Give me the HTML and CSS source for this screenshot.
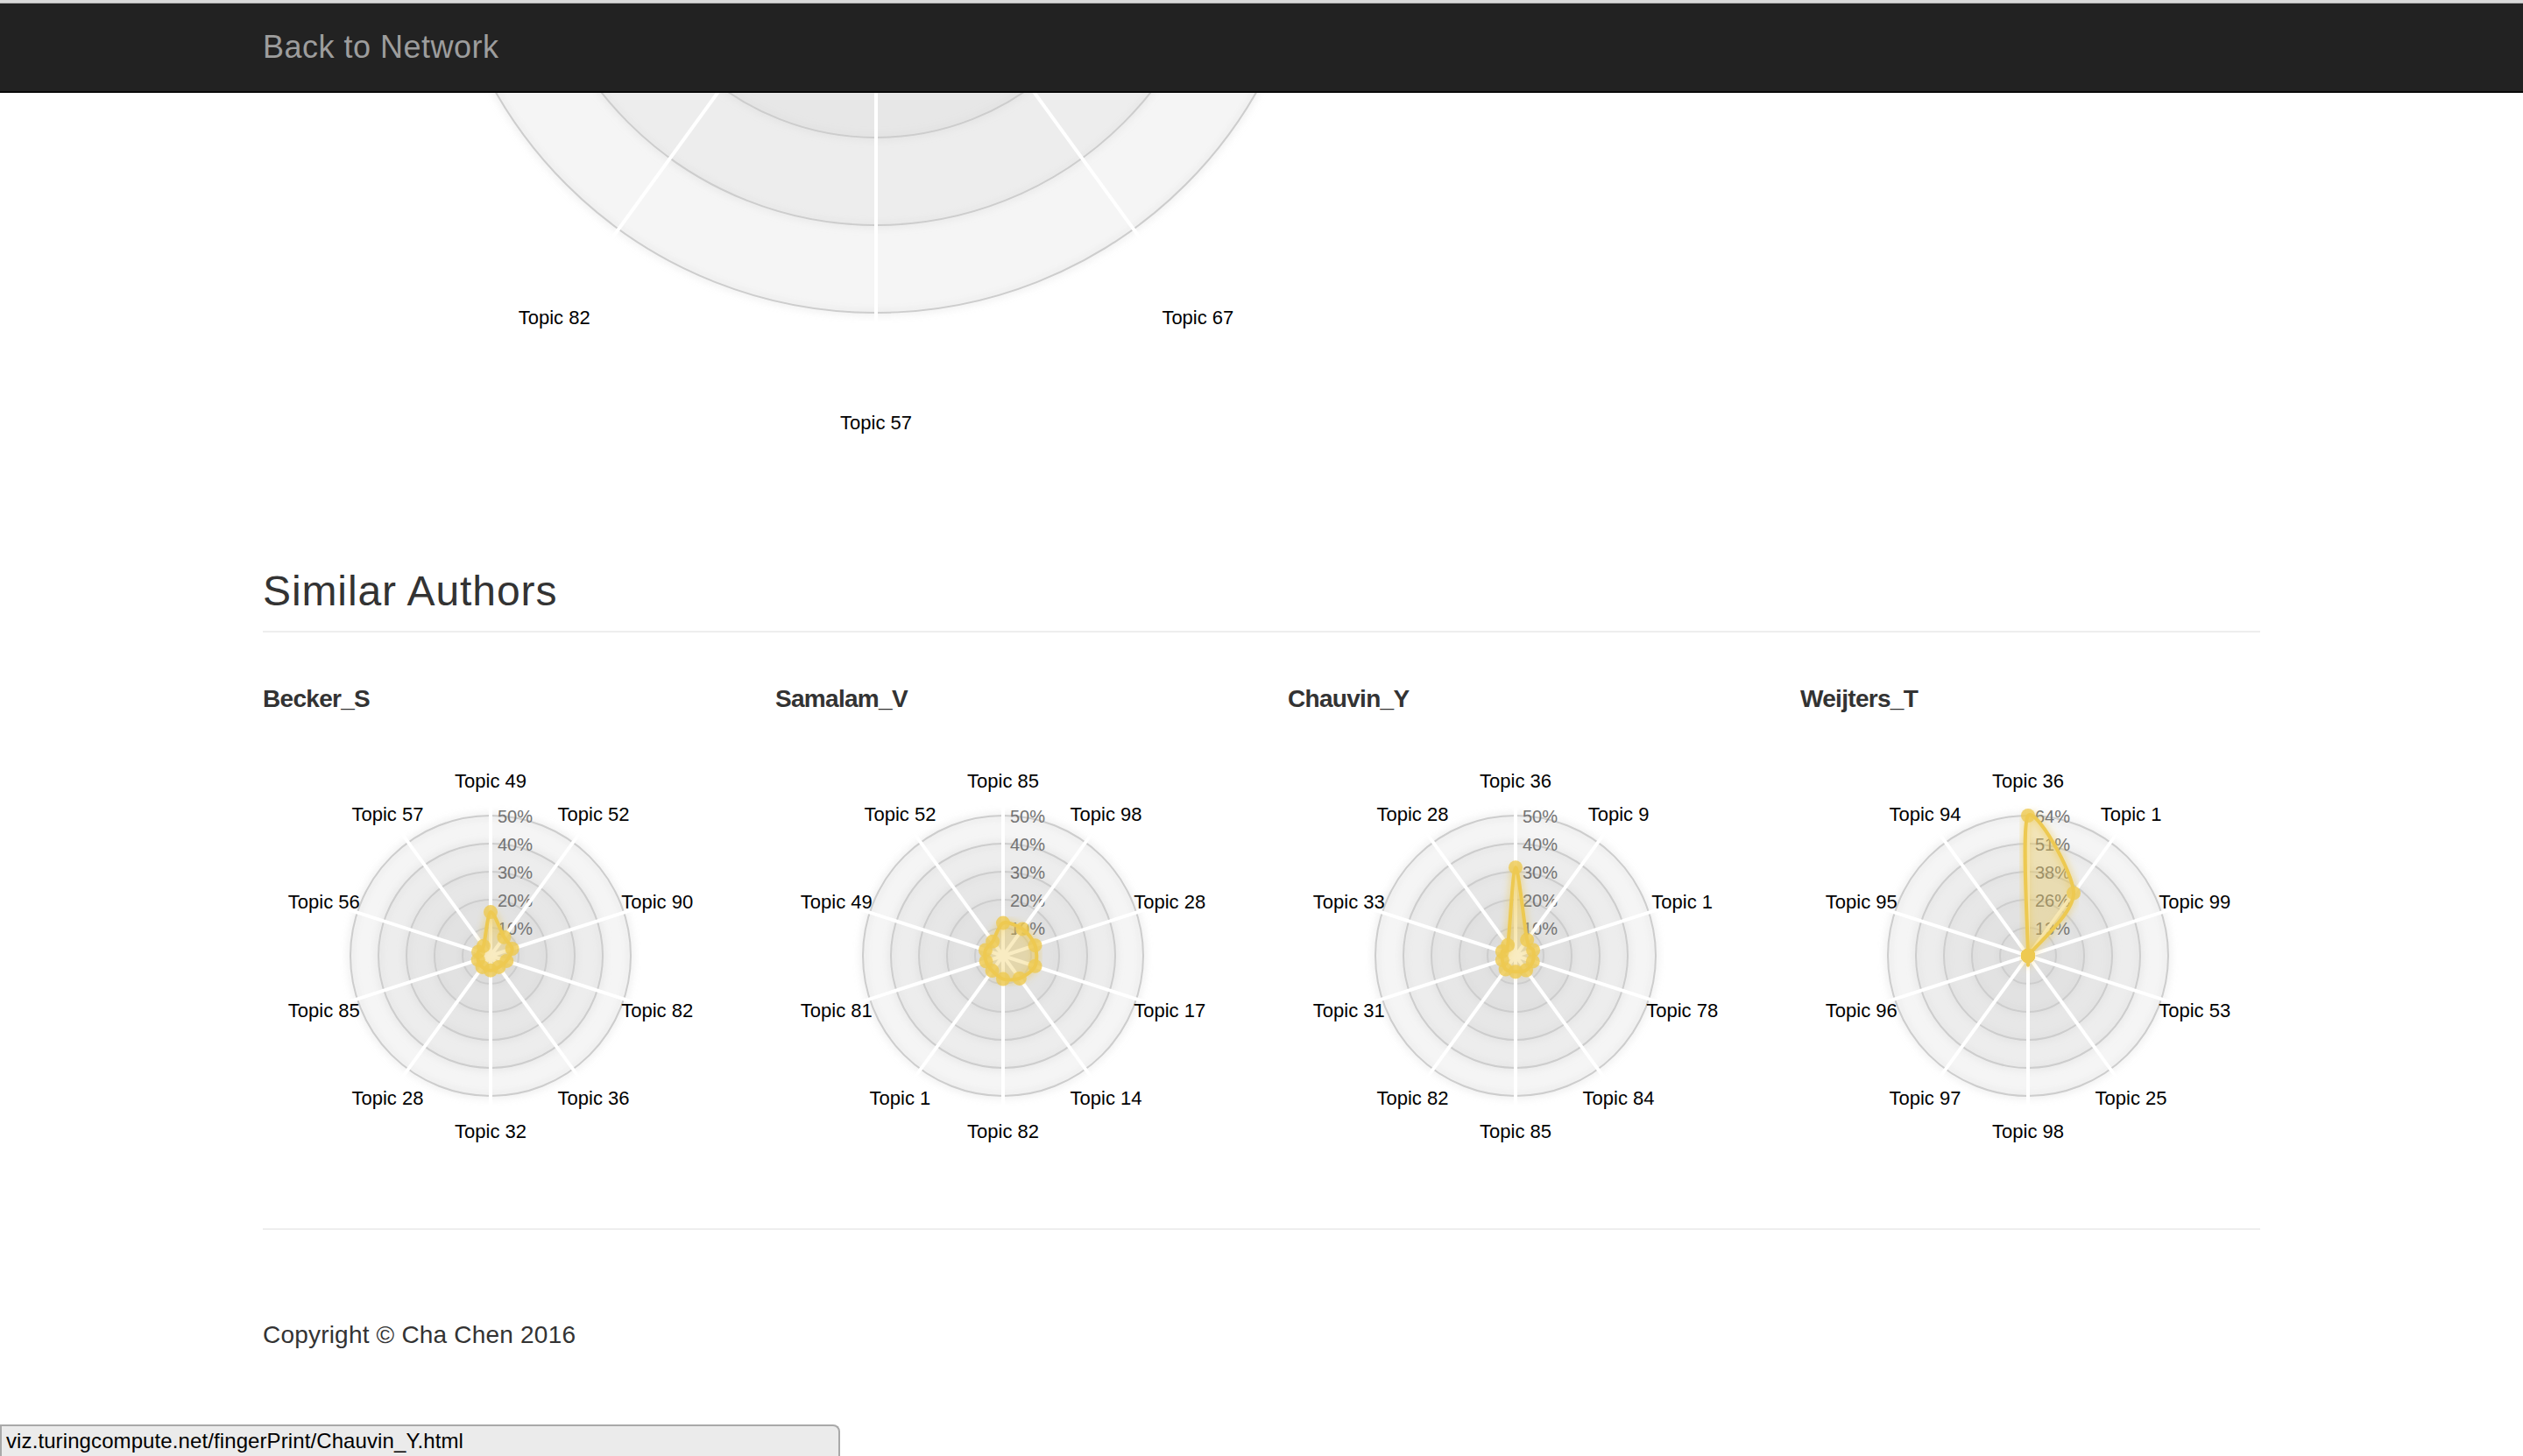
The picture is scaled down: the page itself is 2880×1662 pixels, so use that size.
FILE: index.html
```html
<!DOCTYPE html>
<html lang="en">
<head>
<meta charset="utf-8">
<title>Chauvin_Y fingerprint</title>
<link rel="stylesheet" href="styles.css">
</head>
<body>
<div class="topline"></div>
<nav class="navbar">
  <div class="navbar-inner">
    <a class="brand" href="#">Back to Network</a>
  </div>
</nav>
<div class="container">
  <div class="main-chart" id="chart-main"></div>
  <div class="page-header">
    <h3>Similar Authors</h3>
  </div>
  <div class="row">
    <div class="col">
      <h4 class="author">Becker_S</h4>
      <div class="chart" id="chart-becker"></div>
    </div>
    <div class="col">
      <h4 class="author">Samalam_V</h4>
      <div class="chart" id="chart-samalam"></div>
    </div>
    <div class="col">
      <h4 class="author">Chauvin_Y</h4>
      <div class="chart" id="chart-chauvin"></div>
    </div>
    <div class="col">
      <h4 class="author">Weijters_T</h4>
      <div class="chart" id="chart-weijters"></div>
    </div>
  </div>
  <hr class="divider">
  <footer class="footer">
    <p>Copyright &copy; Cha Chen 2016</p>
  </footer>
</div>
<div class="status">viz.turingcompute.net/fingerPrint/Chauvin_Y.html</div>
<script src="app.js"></script>
</body>
</html>
```
FILE: styles.css
```css
* { box-sizing: border-box; }
html, body { margin: 0; padding: 0; background: #fff; }
body {
  font-family: "Liberation Sans", Helvetica, Arial, sans-serif;
  font-size: 28px;
  line-height: 40px;
  color: #333;
}
.topline {
  height: 4px;
  background: #d9d9d9;
  border-bottom: 1px solid #b3b3b3;
}
.navbar {
  height: 102px;
  background: #222;
  border-bottom: 2px solid #080808;
}
.navbar-inner {
  width: 2340px;
  margin: 0 auto;
  padding: 0 30px;
}
.brand {
  display: inline-block;
  margin-left: -30px;
  padding: 30px;
  font-size: 36px;
  line-height: 40px;
  color: #9d9d9d;
  text-decoration: none;
  letter-spacing: 0.5px;
}
.container {
  width: 2340px;
  margin: 0 auto;
  padding: 0 30px;
}
.main-chart { height: 451px; }
.main-chart svg, .chart svg { display: block; }
.page-header {
  margin: 92px 0 40px;
  padding-bottom: 18px;
  border-bottom: 2px solid #eee;
}
.page-header h3 {
  margin: 0;
  font-size: 48px;
  line-height: 52.8px;
  font-weight: normal;
  letter-spacing: 0.9px;
  color: #333;
}
.row {
  display: flex;
  margin: 0 -30px;
}
.col {
  width: 585px;
  padding: 0 30px;
}
.author {
  margin: 20px 0 18px;
  font-size: 28px;
  line-height: 31px;
  font-weight: bold;
  letter-spacing: -0.7px;
  color: #333;
}
.divider {
  margin: 51px 0 0;
  border: 0;
  border-top: 2px solid #eee;
  height: 0;
}
.footer { margin-top: 100px; }
.footer p { margin: 0; letter-spacing: 0.2px; }
.status {
  position: fixed;
  left: 0;
  bottom: 0;
  width: 959px;
  height: 36px;
  padding-left: 5px;
  background: #ebebeb;
  border: 2px solid #a9a9a9;
  border-bottom: 0;
  border-top-right-radius: 8px;
  font-size: 24px;
  line-height: 33px;
  letter-spacing: 0.1px;
  color: #000;
  white-space: nowrap;
}

/* radar chart parts */
.grid-circle {
  fill: #cdcdcd;
  fill-opacity: 0.1;
  stroke: #cdcdcd;
  stroke-width: 2;
}
.axis-label {
  font-family: "Liberation Sans", Helvetica, Arial, sans-serif;
  font-size: 20px;
  fill: #737373;
}
.spoke {
  stroke: #fff;
  stroke-width: 4;
}
.legend {
  font-family: "Liberation Sans", Helvetica, Arial, sans-serif;
  font-size: 22px;
  fill: #000;
}
.radar-area {
  fill: #edc951;
  fill-opacity: 0.35;
}
.radar-stroke {
  fill: none;
  stroke: #edc951;
  stroke-width: 4;
}
.radar-dot {
  fill: #edc951;
  fill-opacity: 0.8;
}
```
FILE: app.js
```js
(function () {
  var NS = 'http://www.w3.org/2000/svg';
  var uid = 0;

  function mk(tag, attrs, parent) {
    var e = document.createElementNS(NS, tag);
    for (var k in attrs) e.setAttribute(k, attrs[k]);
    if (parent) parent.appendChild(e);
    return e;
  }

  function fmt(v) { return Math.round(v * 100) + '%'; }

  function cardinalClosed(points, tension) {
    var n = points.length, a = (1 - tension) / 2;
    function P(i) { return points[((i % n) + n) % n]; }
    function T(i) {
      var p0 = P(i - 1), p2 = P(i + 1);
      return [a * (p2[0] - p0[0]), a * (p2[1] - p0[1])];
    }
    var d = 'M' + P(0)[0] + ',' + P(0)[1];
    for (var i = 0; i < n; i++) {
      var p = P(i), q = P(i + 1), t0 = T(i), t1 = T(i + 1);
      d += 'C' + (p[0] + t0[0]) + ',' + (p[1] + t0[1]) + ',' +
        (q[0] - t1[0]) + ',' + (q[1] - t1[1]) + ',' + q[0] + ',' + q[1];
    }
    return d + 'Z';
  }

  function radar(hostId, cfg) {
    var host = document.getElementById(hostId);
    var R = cfg.R, margin = cfg.margin, size = 2 * R + 2 * margin;
    var vy = cfg.view ? cfg.view.y : 0, vh = cfg.view ? cfg.view.h : size;
    var cy = margin + R;
    // only texts that fall inside the visible window are drawn
    function visible(y) { return cy + y + 12 > vy && cy + y - 12 < vy + vh; }

    var svg = mk('svg', { width: size, height: vh, viewBox: '0 ' + vy + ' ' + size + ' ' + vh }, host);
    var id = 'glow' + (uid++);
    var defs = mk('defs', {}, svg);
    var f = mk('filter', { id: id }, defs);
    mk('feGaussianBlur', { stdDeviation: 5, result: 'coloredBlur' }, f);
    var m = mk('feMerge', {}, f);
    mk('feMergeNode', { 'in': 'coloredBlur' }, m);
    mk('feMergeNode', { 'in': 'SourceGraphic' }, m);

    var g = mk('g', { transform: 'translate(' + (margin + R) + ',' + cy + ')' }, svg);
    var levels = 5, d;
    for (d = levels; d >= 1; d--) {
      mk('circle', { r: R / levels * d, 'class': 'grid-circle', filter: 'url(#' + id + ')' }, g);
    }
    for (d = levels; d >= 1; d--) {
      var ly = -d * R / levels;
      if (!visible(ly)) continue;
      var t = mk('text', { x: 8, y: ly, dy: '0.4em', 'class': 'axis-label' }, g);
      t.textContent = fmt(cfg.max * d / levels);
    }
    var n = cfg.axes.length, slice = 2 * Math.PI / n;
    cfg.axes.forEach(function (name, i) {
      var ang = slice * i - Math.PI / 2;
      mk('line', { x1: 0, y1: 0, x2: R * 1.1 * Math.cos(ang), y2: R * 1.1 * Math.sin(ang), 'class': 'spoke' }, g);
      var tx = R * 1.25 * Math.cos(ang), ty = R * 1.25 * Math.sin(ang);
      if (!visible(ty)) return;
      var lt = mk('text', { x: tx, y: ty, dy: '0.35em', 'text-anchor': 'middle', 'class': 'legend' }, g);
      lt.textContent = name;
    });
    var pts = cfg.values.map(function (v, i) {
      var ang = slice * i - Math.PI / 2, r = R * v / cfg.max;
      return [r * Math.cos(ang), r * Math.sin(ang)];
    });
    var path = cardinalClosed(pts, 0.7);
    mk('path', { d: path, 'class': 'radar-area' }, g);
    mk('path', { d: path, 'class': 'radar-stroke', filter: 'url(#' + id + ')' }, g);
    pts.forEach(function (p) {
      mk('circle', { cx: p[0], cy: p[1], r: 8, 'class': 'radar-dot' }, g);
    });
  }

  radar('chart-main', {
    R: 500, margin: 200, max: 0.5, view: { y: 949, h: 451 },
    axes: ['Topic 36', 'Topic 9', 'Topic 1', 'Topic 78', 'Topic 67', 'Topic 57', 'Topic 82', 'Topic 31', 'Topic 33', 'Topic 28'],
    values: [0.32, 0.07, 0.06, 0.06, 0.05, 0.05, 0.06, 0.05, 0.05, 0.05]
  });

  radar('chart-becker', {
    R: 160, margin: 100, max: 0.5,
    axes: ['Topic 49', 'Topic 52', 'Topic 90', 'Topic 82', 'Topic 36', 'Topic 32', 'Topic 28', 'Topic 85', 'Topic 56', 'Topic 57'],
    values: [0.156, 0.082, 0.081, 0.06, 0.05, 0.052, 0.05, 0.047, 0.046, 0.043]
  });

  radar('chart-samalam', {
    R: 160, margin: 100, max: 0.5,
    axes: ['Topic 85', 'Topic 98', 'Topic 28', 'Topic 17', 'Topic 14', 'Topic 82', 'Topic 1', 'Topic 81', 'Topic 49', 'Topic 52'],
    values: [0.117, 0.118, 0.12, 0.12, 0.1, 0.083, 0.066, 0.064, 0.066, 0.063]
  });

  radar('chart-chauvin', {
    R: 160, margin: 100, max: 0.5,
    axes: ['Topic 36', 'Topic 9', 'Topic 1', 'Topic 78', 'Topic 84', 'Topic 85', 'Topic 82', 'Topic 31', 'Topic 33', 'Topic 28'],
    values: [0.315, 0.07, 0.066, 0.065, 0.064, 0.057, 0.06, 0.05, 0.05, 0.047]
  });

  radar('chart-weijters', {
    R: 160, margin: 100, max: 0.64,
    axes: ['Topic 36', 'Topic 1', 'Topic 99', 'Topic 53', 'Topic 25', 'Topic 98', 'Topic 97', 'Topic 96', 'Topic 95', 'Topic 94'],
    values: [0.64, 0.354, 0, 0, 0, 0, 0, 0, 0, 0]
  });
})();
```
